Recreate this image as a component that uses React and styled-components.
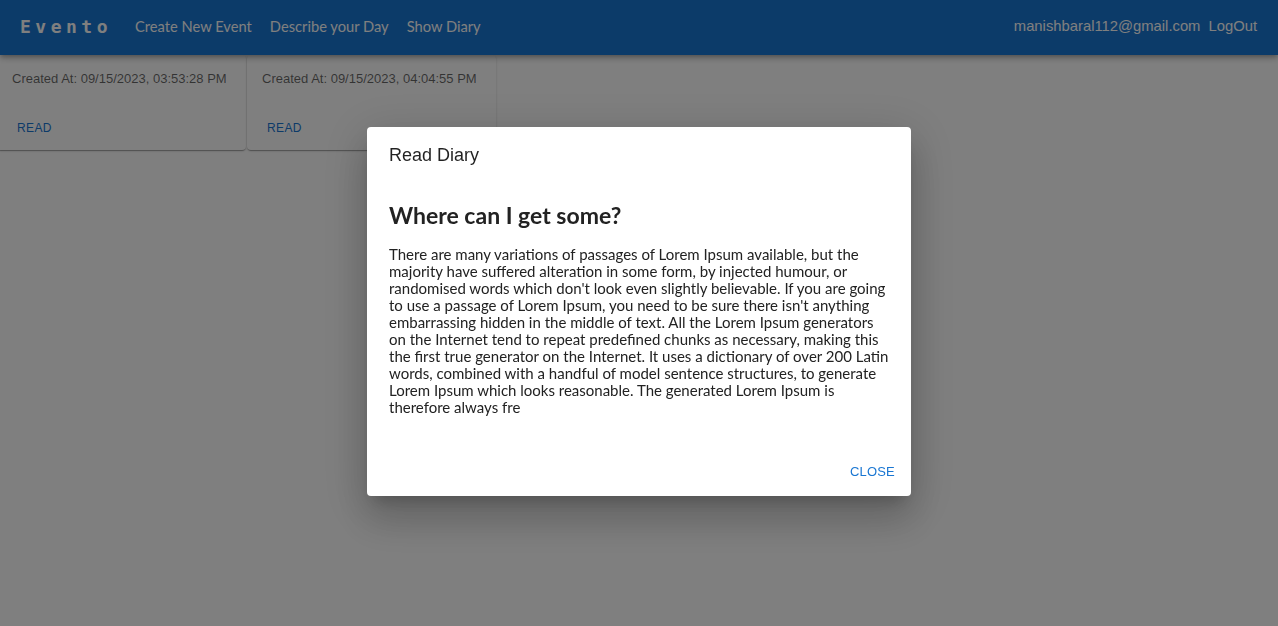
import React from "react";
import styled, { createGlobalStyle } from "styled-components";

const entries = [
  { id: 1, created: "09/15/2023, 03:53:28 PM" },
  { id: 2, created: "09/15/2023, 04:04:55 PM" },
];

const diaryLines = [
  "There are many variations of passages of Lorem Ipsum available, but the",
  "majority have suffered alteration in some form, by injected humour, or",
  "randomised words which don't look even slightly believable. If you are going",
  "to use a passage of Lorem Ipsum, you need to be sure there isn't anything",
  "embarrassing hidden in the middle of text. All the Lorem Ipsum generators",
  "on the Internet tend to repeat predefined chunks as necessary, making this",
  "the first true generator on the Internet. It uses a dictionary of over 200 Latin",
  "words, combined with a handful of model sentence structures, to generate",
  "Lorem Ipsum which looks reasonable. The generated Lorem Ipsum is",
  "therefore always fre",
];

const GlobalStyle = createGlobalStyle`
  body {
    margin: 0;
    font-family: "Liberation Sans", Arial, sans-serif;
    background: #fff;
    overflow: hidden;
  }
`;

const App = () => {
  return (
    <>
      <GlobalStyle />
      <Page>
        <AppBar>
          <Brand>Evento</Brand>
          <NavLinks>
            <NavLink>Create New Event</NavLink>
            <NavLink>Describe your Day</NavLink>
            <NavLink>Show Diary</NavLink>
          </NavLinks>
          <UserArea>
            <UserText>manishbaral112@gmail.com</UserText>
            <UserText>LogOut</UserText>
          </UserArea>
        </AppBar>
        <CardRow>
          {entries.map((entry) => (
            <Card key={entry.id}>
              <CardBody>
                <CardDate>Created At: {entry.created}</CardDate>
              </CardBody>
              <CardActions>
                <TextButton small>Read</TextButton>
              </CardActions>
            </Card>
          ))}
        </CardRow>
      </Page>
      <Backdrop>
        <Dialog>
          <DialogTitle>Read Diary</DialogTitle>
          <DialogContent>
            <DiaryHeading>Where can I get some?</DiaryHeading>
            <DiaryText>
              {diaryLines.map((line, i) => (
                <Line key={i}>{line}</Line>
              ))}
            </DiaryText>
          </DialogContent>
          <DialogActions>
            <TextButton>Close</TextButton>
          </DialogActions>
        </Dialog>
      </Backdrop>
    </>
  );
};

const Page = styled.div`
  min-height: 100vh;
  background: #fff;
`;

const AppBar = styled.header`
  height: 55px;
  box-sizing: border-box;
  display: flex;
  align-items: center;
  padding: 0 21px 3px 20px;
  background: #1976d2;
  color: #fff;
  box-shadow: 0px 2px 4px -1px rgba(0, 0, 0, 0.2),
    0px 4px 5px 0px rgba(0, 0, 0, 0.14), 0px 1px 10px 0px rgba(0, 0, 0, 0.12);
  position: relative;
  z-index: 1;
`;

const Brand = styled.div`
  font-family: "DejaVu Sans Mono", monospace;
  font-weight: 700;
  font-size: 18px;
  letter-spacing: 4.5px;
  margin-right: 23px;
`;

const NavLinks = styled.nav`
  display: flex;
  gap: 18px;
`;

const NavLink = styled.span`
  font-family: Lato, "Noto Sans", sans-serif;
  font-size: 14.7px;
`;

const UserArea = styled.div`
  margin-left: auto;
  display: flex;
  gap: 8px;
`;

const UserText = styled.span`
  font-size: 14.8px;
`;

const CardRow = styled.div`
  display: flex;
  gap: 1px;
  margin-left: -3px;
`;

const Card = styled.div`
  width: 249px;
  background: #fff;
  border-radius: 4px;
  box-shadow: 0px 2px 1px -1px rgba(0, 0, 0, 0.2),
    0px 1px 1px 0px rgba(0, 0, 0, 0.14), 0px 1px 3px 0px rgba(0, 0, 0, 0.12);
`;

const CardBody = styled.div`
  padding: 16px 15px 19px;
`;

const CardDate = styled.div`
  font-size: 13px;
  line-height: 16px;
  color: rgba(0, 0, 0, 0.6);
  white-space: nowrap;
`;

const CardActions = styled.div`
  display: flex;
  padding: 8px;
`;

const TextButton = styled.button`
  border: 0;
  background: none;
  padding: ${(p) => (p.small ? "6px 12px" : "8px 8px")};
  font-family: "Liberation Sans", Arial, sans-serif;
  font-size: ${(p) => (p.small ? "12px" : "13px")};
  line-height: 16px;
  letter-spacing: ${(p) => (p.small ? "0.4px" : "0.2px")};
  text-transform: uppercase;
  color: #1976d2;
  cursor: pointer;
`;

const Backdrop = styled.div`
  position: fixed;
  inset: 0;
  background: rgba(0, 0, 0, 0.5);
  display: flex;
  align-items: center;
  justify-content: center;
  z-index: 10;
`;

const Dialog = styled.div`
  width: 544px;
  margin-top: -4px;
  background: #fff;
  border-radius: 4px;
  box-shadow: 0px 11px 15px -7px rgba(0, 0, 0, 0.2),
    0px 24px 38px 3px rgba(0, 0, 0, 0.14), 0px 9px 46px 8px rgba(0, 0, 0, 0.12);
`;

const DialogTitle = styled.h2`
  margin: 0;
  padding: 14px 22px;
  font-size: 18px;
  line-height: 28px;
  font-weight: 400;
  color: rgba(0, 0, 0, 0.87);
`;

const DialogContent = styled.div`
  padding: 0 22px 22px;
  color: #222;
  font-family: Lato, "Noto Sans", sans-serif;
`;

const DiaryHeading = styled.h3`
  margin: 19px 0 18px;
  font-size: 23px;
  line-height: 26px;
  font-weight: 700;
`;

const DiaryText = styled.p`
  margin: 0 0 10px;
  font-size: 15px;
  line-height: 17px;
`;

const Line = styled.span`
  display: block;
  white-space: nowrap;
`;

const DialogActions = styled.div`
  display: flex;
  justify-content: flex-end;
  padding: 8px;
`;

export default App;
